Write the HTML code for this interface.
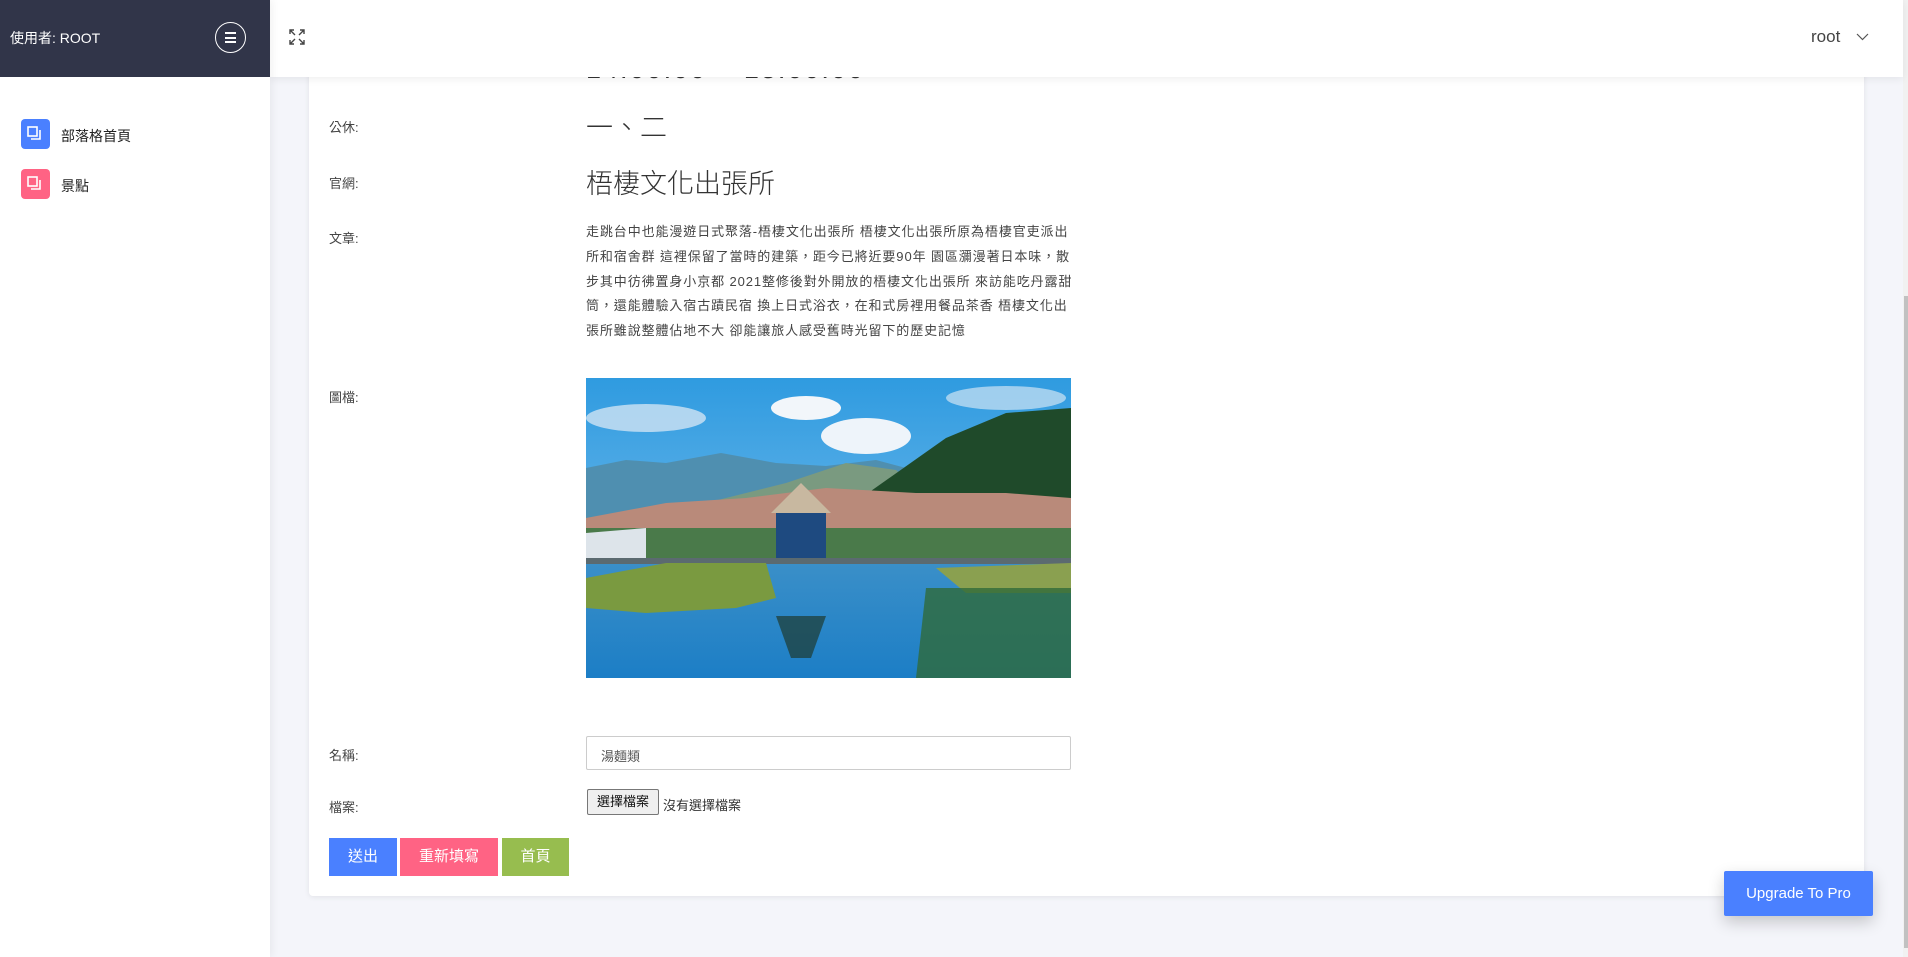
<!DOCTYPE html>
<html><head><meta charset="utf-8">
<style>
*{box-sizing:border-box;margin:0;padding:0}
body{width:1908px;height:957px;overflow:hidden;background:#f4f5fa;font-family:"Liberation Sans","Noto Sans CJK TC",sans-serif;color:#333;position:relative}
.side{position:absolute;left:0;top:0;width:270px;height:957px;background:#fff;box-shadow:2px 0 8px rgba(0,0,0,.06);z-index:3}
.sidehead{height:77px;background:#313549;color:#fff;position:relative}
.sidehead .u{position:absolute;left:10px;top:28px;font-size:14px}
.ham{position:absolute;left:215px;top:22px;width:31px;height:31px;border:1.5px solid #fff;border-radius:50%}
.ham i{position:absolute;left:9px;width:11px;height:2px;background:#fff}
.mi{position:absolute;left:21px;width:29px;height:30px;border-radius:4px}
.mi svg{position:absolute;left:6px;top:7px}
.mt{position:absolute;left:61px;font-size:14px;color:#222}
.top{position:absolute;left:270px;top:0;width:1633px;height:77px;background:#fff;box-shadow:0 2px 8px rgba(0,0,0,.07);z-index:2}
.card{position:absolute;left:309px;top:40px;width:1555px;height:856px;background:#fff;border-radius:4px;box-shadow:0 1px 6px rgba(0,0,0,.08)}
.lbl{position:absolute;left:329px;font-size:13px;color:#444}
.val{position:absolute;left:586px;color:#333;font-weight:300}
.art{position:absolute;left:586px;top:220px;width:490px;font-size:13px;letter-spacing:.9px;line-height:24.8px;color:#444}
.btn{position:absolute;top:838px;height:38px;color:#fff;font-size:15px;text-align:center;line-height:38px}
.sb{position:absolute;left:1903px;top:0;width:5px;height:957px;background:#f1f1f1}
.sb i{position:absolute;left:1px;top:296px;width:4px;height:652px;background:#c1c1c1}
</style></head><body>
<div class="side">
 <div class="sidehead"><span class="u">使用者: ROOT</span>
  <div class="ham"><i style="top:9px"></i><i style="top:13.5px"></i><i style="top:18px"></i></div></div>
 <div class="mi" style="top:119px;background:#4a80ff"><svg width="16" height="16" viewBox="0 0 16 16" fill="none" stroke="#fff" stroke-width="1.6"><rect x="1" y="1" width="9" height="9"/><path d="M13 4v9H4"/></svg></div>
 <div class="mt" style="top:126px">部落格首頁</div>
 <div class="mi" style="top:169px;background:#ff6384"><svg width="16" height="16" viewBox="0 0 16 16" fill="none" stroke="#fff" stroke-width="1.6"><rect x="1" y="1" width="9" height="9"/><path d="M13 4v9H4"/></svg></div>
 <div class="mt" style="top:176px">景點</div>
</div>
<div class="top">
 <svg style="position:absolute;left:19px;top:29px" width="16" height="16" viewBox="0 0 16 16" fill="none" stroke="#444" stroke-width="1.4"><path d="M1 5V1h4M1 1l5 5M11 1h4v4M15 1l-5 5M1 11v4h4M1 15l5-5M15 11v4h-4M15 15l-5-5"/></svg>
 <span style="position:absolute;left:1541px;top:27px;font-size:17px;color:#444">root</span>
 <svg style="position:absolute;left:1586px;top:33px" width="13" height="8" viewBox="0 0 13 8" fill="none" stroke="#555" stroke-width="1.2"><path d="M1 1l5.5 5.5L12 1"/></svg>
</div>
<div class="card"></div>
<div class="val" style="top:54px;font-size:27px;z-index:1;letter-spacing:2px">14:00:00 ~ 18:00:00</div>
<div class="lbl" style="top:117px">公休:</div>
<div class="val" style="top:106px;font-size:27px">一、二</div>
<div class="lbl" style="top:173px">官網:</div>
<div class="val" style="top:162px;font-size:27px">梧棲文化出張所</div>
<div class="lbl" style="top:228px">文章:</div>
<div class="art">走跳台中也能漫遊日式聚落-梧棲文化出張所 梧棲文化出張所原為梧棲官吏派出所和宿舍群 這裡保留了當時的建築，距今已將近要90年 園區瀰漫著日本味，散步其中彷彿置身小京都 2021整修後對外開放的梧棲文化出張所 來訪能吃丹露甜筒，還能體驗入宿古蹟民宿 換上日式浴衣，在和式房裡用餐品茶香 梧棲文化出張所雖說整體佔地不大 卻能讓旅人感受舊時光留下的歷史記憶</div>
<div class="lbl" style="top:387px">圖檔:</div>
<svg style="position:absolute;left:586px;top:378px" width="485" height="300" viewBox="0 0 485 300">
<defs><linearGradient id="sk" x1="0" y1="0" x2="0" y2="1"><stop offset="0" stop-color="#2f9be0"/><stop offset="1" stop-color="#8cc6ee"/></linearGradient>
<linearGradient id="wt" x1="0" y1="0" x2="0" y2="1"><stop offset="0" stop-color="#3a8fc8"/><stop offset="1" stop-color="#1c7ec6"/></linearGradient></defs>
<rect width="485" height="300" fill="url(#sk)"/>
<ellipse cx="220" cy="30" rx="35" ry="12" fill="#f2f6fa"/><ellipse cx="280" cy="58" rx="45" ry="18" fill="#eef4fa"/><ellipse cx="60" cy="40" rx="60" ry="14" fill="#cfe4f4" opacity=".8"/><ellipse cx="420" cy="20" rx="60" ry="12" fill="#cfe4f4" opacity=".7"/>
<path d="M0 90L40 82 80 85 135 75 190 85 240 88 290 82 320 90 340 95 485 95V170H0Z" fill="#4f8fb0"/>
<path d="M100 130L200 105 260 85 310 92 330 110 340 150H100Z" fill="#7a9a80"/>
<path d="M275 120L360 60 420 35 485 30V170H275Z" fill="#1f4a2a"/>
<path d="M0 140L80 125 160 120 240 110 330 115 420 115 485 120V185H0Z" fill="#b98a7a"/>
<path d="M0 150H485V185H0Z" fill="#4a7a4a"/>
<path d="M0 155L60 150 60 180H0Z" fill="#dde4ea"/>
<rect x="0" y="180" width="485" height="6" fill="#5b6a70"/>
<rect x="0" y="186" width="485" height="114" fill="url(#wt)"/>
<path d="M0 200L80 185 180 185 190 220 150 230 60 235 0 230Z" fill="#7a9a40"/>
<path d="M350 190L485 185V215L380 215Z" fill="#8aa050"/>
<path d="M340 210L485 210V300H330Z" fill="#2f6a3a" opacity=".8"/>
<path d="M185 135L215 105 245 135Z" fill="#c8b8a0"/><rect x="190" y="135" width="50" height="45" fill="#1e4a80"/>
<path d="M190 238H240L225 280 205 280Z" fill="#1e3a30" opacity=".7"/>
</svg>
<div class="lbl" style="top:745px">名稱:</div>
<div style="position:absolute;left:586px;top:736px;width:485px;height:34px;border:1px solid #ccc;border-radius:2px;font-size:13px;color:#555;padding:9px 0 0 14px">湯麵類</div>
<div class="lbl" style="top:797px">檔案:</div>
<div style="position:absolute;left:587px;top:789px;width:72px;height:26px;border:1px solid #777;background:#efefef;border-radius:2px;font-size:13px;color:#111;line-height:24px;text-align:center;white-space:nowrap">選擇檔案</div>
<span style="position:absolute;left:663px;top:795px;font-size:13px;color:#333;white-space:nowrap">沒有選擇檔案</span>
<div class="btn" style="left:329px;width:68px;background:#4a80ff">送出</div>
<div class="btn" style="left:400px;width:98px;background:#ff6384">重新填寫</div>
<div class="btn" style="left:502px;width:67px;background:#97bd4f">首頁</div>
<div style="position:absolute;left:1724px;top:871px;width:149px;height:45px;background:#4a80ff;color:#fff;font-size:15px;text-align:center;line-height:45px;border-radius:2px;box-shadow:0 6px 16px rgba(0,0,0,.2)">Upgrade To Pro</div>
<div class="sb"><i></i></div>
</body></html>
